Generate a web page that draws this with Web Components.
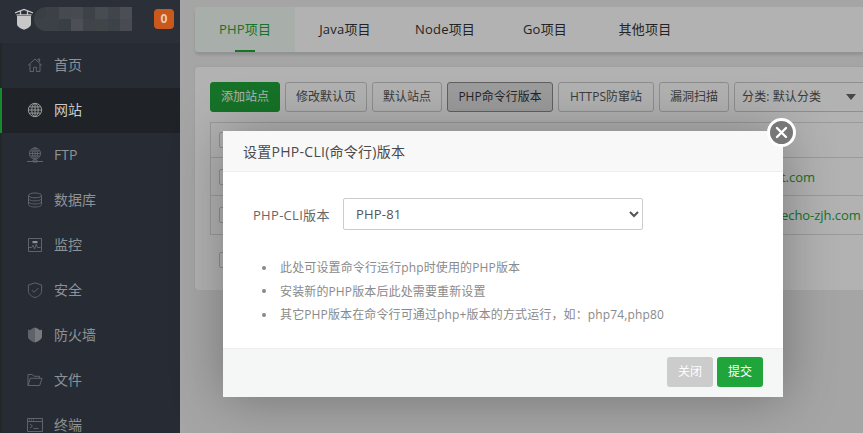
<!DOCTYPE html>
<html lang="zh"><head><meta charset="utf-8"><title>PHP-CLI</title>
<style>
html,body{margin:0;height:100%;overflow:hidden}
body{font-family:"Open Sans","Noto Sans CJK SC",sans-serif;background:#ededed}
bt-app{height:433px}
</style></head><body>
<bt-app>
  <bt-sidebar slot="side">
    <bt-nav icon="home">首页</bt-nav>
    <bt-nav icon="globe" active>网站</bt-nav>
    <bt-nav icon="ftp">FTP</bt-nav>
    <bt-nav icon="db">数据库</bt-nav>
    <bt-nav icon="monitor">监控</bt-nav>
    <bt-nav icon="shield">安全</bt-nav>
    <bt-nav icon="wall">防火墙</bt-nav>
    <bt-nav icon="folder">文件</bt-nav>
    <bt-nav icon="term">终端</bt-nav>
  </bt-sidebar>
  <bt-tabs>
    <bt-tab active>PHP项目</bt-tab><bt-tab>Java项目</bt-tab><bt-tab>Node项目</bt-tab><bt-tab>Go项目</bt-tab><bt-tab>其他项目</bt-tab>
  </bt-tabs>
  <bt-panel>
    <bt-btn kind="primary">添加站点</bt-btn><bt-btn>修改默认页</bt-btn><bt-btn>默认站点</bt-btn><bt-btn kind="active" style="width:106px">PHP命令行版本</bt-btn><bt-btn style="width:96px">HTTPS防窜站</bt-btn><bt-btn>漏洞扫描</bt-btn><bt-cat>分类: 默认分类</bt-cat>
    <bt-row slot="rows" h="35"></bt-row>
    <bt-row slot="rows" h="38">t.com</bt-row>
    <bt-row slot="rows" h="39">echo-zjh.com</bt-row>
  </bt-panel>
  <bt-modal>
    <span slot="title">设置PHP-CLI(命令行)版本</span>
    <span slot="label">PHP-CLI版本</span>
    <li>此处可设置命令行运行php时使用的PHP版本</li>
    <li>安装新的PHP版本后此处需要重新设置</li>
    <li>其它PHP版本在命令行可通过php+版本的方式运行，如：php74,php80</li>
  </bt-modal>
</bt-app>
<script>
const def=(n,css,html)=>{customElements.define(n,class extends HTMLElement{
  constructor(){super();this.attachShadow({mode:'open'}).innerHTML=`<style>${css}</style>${typeof html==='function'?html(this):html}`;}
})};
const I={
home:'<path d="M1 8.500 8 2l7 6.500M3 7v7.500h3.600v-4.200h2.800v4.200H13V7M11 3.600V2h1.600v3"/>',
globe:'<circle cx="8" cy="8" r="6.700"/><ellipse cx="8" cy="8" rx="3.200" ry="6.700"/><path d="M8 1.300v13.400M1.300 8h13.400M2.200 4.900h11.600M2.200 11.100h11.600"/>',
ftp:'<circle cx="8" cy="6.500" r="5.600"/><ellipse cx="8" cy="6.500" rx="2.600" ry="5.600"/><path d="M8 1v11M2.400 6.500h11.200M3.200 4h9.600M3.200 9h9.600M0 14.500h16M6 13h4v2H6z"/>',
db:'<ellipse cx="8" cy="3.400" rx="6.500" ry="2.400"/><path d="M1.500 3.400v9.200c0 1.300 2.900 2.400 6.500 2.400s6.500-1.100 6.500-2.400V3.400M1.500 6.500c0 1.300 2.900 2.400 6.500 2.400s6.500-1.100 6.500-2.400M1.500 9.600c0 1.300 2.900 2.400 6.500 2.400s6.500-1.100 6.500-2.400"/>',
monitor:'<path d="M1.500 1.500h13v13h-13zM1.500 10.500h3.200l1.300-2.400 1.600 4 1.600-5 1.200 3.400h3.100"/><path d="M5.500 4h5v2.200h-5z" fill="currentColor" stroke="none"/>',
shield:'<path d="M8 .8 14.600 3v6.200c0 3-3 5.200-6.600 6.400C4.400 14.400 1.400 12.200 1.400 9.200V3z"/><path d="m4.800 8 2.300 2.300 4.300-4.300"/>',
wall:'<path stroke="none" fill="#777b80" d="M1 2.500 3 3.300 5 1.800 8 .4l3 1.400 2 1.500 2-.8v7c0 2.800-3.400 4.800-7 5.900-3.600-1.100-7-3.100-7-5.900z"/><path stroke="none" fill="#272c34" opacity=".3" d="M8 .4v15c-3.600-1.100-7-3.100-7-5.900v-7l2 .8 2-1.500z"/>',
folder:'<path d="M1 13.500V2.500h4.500L7 4.300h5.500v2M1 13.500 3.300 6.300H15l-2.300 7.200z"/>',
term:'<path d="M.5 1.500h15v13H.5zM.5 4.500h15"/><path d="m3 7 2.500 2L3 11M6.500 11.500h5"/><path d="M2 3h1M4 3h1M6 3h1"/>'
};
def('bt-app',`:host{display:grid;grid-template-columns:180px 1fr;grid-template-rows:auto 1fr;position:relative;overflow:hidden;width:863px}
 .s{grid-row:1/3;min-width:0;position:relative;z-index:1}.m{min-width:0;padding:7px 0 0 15px;display:flex;flex-direction:column;gap:15px;overflow:hidden}`,
 `<div class="s"><slot name="side"></slot></div><div class="m"><slot></slot></div><div class="ov" style="position:absolute;inset:0;background:rgba(0,0,0,.3)"></div>`);
def('bt-sidebar',`:host{display:block;background:#272c34;height:433px;overflow:hidden;color:#8e9296;font-size:14px}
 header{height:43px;background:#2a2f38;display:flex;align-items:center;box-sizing:border-box;padding:0 6px 5px 15px}
 svg{width:18px;height:22px;flex:none}
 .mos{width:98px;height:24px;margin-left:1px;display:grid;grid-template-columns:repeat(8,12.250px);grid-auto-rows:12px;border-radius:12px 0 0 12px;overflow:hidden}
 .b{margin-left:auto;width:20px;height:20px;border-radius:4px;background:#c8581c;color:#f0c8b0;font:700 12px/20px "Open Sans",sans-serif;text-align:center}`,
 ()=>{const c=['3a3e45','3d4047','454950','474b51','3d4248','474b52','40454b','4b4e55','3c4047','3c4147','3a3e46','4c4f55','3e4449','404648','3c4248','484c52'];
 return `<header><svg viewBox="0 0 18 22"><path fill="#c8c8c8" d="M2 8h14v8c0 2.800-3.800 4.500-7 5.800C5.800 20.500 2 18.800 2 16z"/><path fill="none" stroke="#c8c8c8" stroke-width="1.300" d="M0 5 9 1.500 18 5M1.500 6.800h15M5.500 3v3.500M12.500 3v3.500"/></svg><div class="mos">${c.map(x=>`<i style="background:#${x}"></i>`).join('')}</div><div class="b">0</div></header><slot></slot>`});
def('bt-nav',`:host{display:flex;align-items:center;height:45px;box-sizing:border-box;border-left:2px solid #23282a;padding:0 0 2px 25px;gap:11px;line-height:20px}
 :host([active]){background:#1f2227;border-left-color:#178a2e;color:#c8cacc}
 svg{width:16px;height:16px;flex:none;fill:none;stroke:#5e646c;stroke-width:1}
 :host([active]) svg{stroke:#999}`,
 el=>`<svg viewBox="0 0 16 16">${I[el.getAttribute('icon')]}</svg><span><slot></slot></span>`);
def('bt-tabs',`:host{display:flex;height:45px;background:#fff;border-radius:4px 0 0 4px;box-shadow:0 3px 3px rgba(0,0,0,.12);flex:none;overflow:hidden}`,`<slot></slot>`);
def('bt-tab',`:host{display:block;position:relative;width:100px;flex:none;text-align:center;font-size:13px;line-height:45px;color:#333;letter-spacing:.2px}
 :host([active]){background:#f1f9f3;color:#20a53a}
 :host([active])::after{content:"";position:absolute;left:40px;bottom:0;width:20px;height:2px;background:#20a53a}`,`<slot></slot>`);
def('bt-panel',`:host{display:block;background:#fff;border-radius:4px 0 0 4px;box-sizing:border-box;padding:15px 0 0 15px;height:223px;box-shadow:0 0 3px rgba(0,0,0,.08);width:700px;flex:none}
 .t{display:flex;gap:5px;height:30px}
 .rows{margin-top:10px;border-left:1px solid #ddd;border-top:1px solid #ddd}
 .cb{display:block;width:14px;height:14px;border:1px solid #ccc;border-radius:2px;margin:17px 0 0 9px;background:#fff}`,
 `<div class="t"><slot></slot></div><div class="rows"><slot name="rows"></slot></div><span class="cb"></span>`);
def('bt-btn',`:host{display:block;flex:none;box-sizing:border-box;height:30px;line-height:28px;padding:0 10px;border:1px solid #ccc;border-radius:3px;font-size:12px;color:#555;background:#fff;text-align:center;white-space:nowrap}
 :host([kind=primary]){background:#20a53a;border-color:#20a53a;color:#fff}
 :host([kind=active]){background:#e0e0e0;border-color:#8c8c8c;color:#333}`,`<slot></slot>`);
def('bt-cat',`:host{display:block;flex:none;position:relative;box-sizing:border-box;width:140px;height:30px;line-height:28px;padding-left:7px;border:1px solid #ccc;border-radius:3px;font-size:12px;color:#555;background:#fff;letter-spacing:.1px}
 i{position:absolute;left:111px;top:11px;border:5.500px solid transparent;border-top:6px solid #666;border-bottom:0}`,`<slot></slot><i></i>`);
def('bt-row',`:host{display:flex;align-items:center;box-sizing:border-box;border-bottom:1px solid #ddd;font-size:13px;color:#20a53a;padding-left:570px;letter-spacing:-.05px}
 .cb{position:absolute;left:219px;width:14px;height:14px;border:1px solid #ccc;border-radius:2px;background:#fff}`,
 el=>{el.style.height=el.getAttribute('h')+'px';return `<span class="cb"></span><slot></slot>`});
def('bt-modal',`:host{position:absolute;z-index:2;left:223px;top:131px;width:560px;height:266px;background:#fff;box-shadow:1px 1px 50px rgba(0,0,0,.3);display:flex;flex-direction:column;font-size:12px;color:#666}
 header{height:41px;box-sizing:border-box;background:#f8f8f8;border-bottom:1px solid #eee;padding-left:20px;font-size:14px;line-height:41px;color:#4a4a4a;letter-spacing:.27px}
 .x{position:absolute;left:544px;top:-13px;width:23px;height:23px;border:3px solid #fff;border-radius:50%;background:#777;box-sizing:content-box}
 .x svg{display:block;width:23px;height:23px}
 main{flex:1;padding:26px 0 0 30px}
 .f{display:flex;align-items:center;height:32px;font-size:13px;color:#666}
 .f span{width:90px;letter-spacing:.3px}
 select{width:300px;height:32px;box-sizing:border-box;border:1px solid #ccc;border-radius:2px;background:#fff;font:13px "Open Sans",sans-serif;color:#555;padding:0 8px;letter-spacing:.2px}
 ul{margin:26px 0 0;padding:0 0 0 27px;color:#8a8a8a;line-height:23.500px;letter-spacing:.13px;list-style:none}
 ::slotted(li){list-style:none}
 ::slotted(li)::before{content:"";display:inline-block;width:4px;height:4px;border-radius:50%;background:#888;margin:0 14px 2px -18px;vertical-align:middle}
 footer{height:49px;box-sizing:border-box;border-top:1px solid #eee;background:#f5f7f6;display:flex;justify-content:flex-end;align-items:center;gap:4px;padding:0 20px 2px}
 .bn{width:46px;height:30px;border-radius:3px;color:#fff;text-align:center;line-height:30px;background:#20a53a}
 .bn.g{background:#ccc}`,
 `<header><slot name="title"></slot></header><div class="x"><svg viewBox="0 0 23 23"><path d="m7 7 9 9m0-9-9 9" stroke="#fff" stroke-width="2.400" stroke-linecap="round"/></svg></div>
 <main><div class="f"><span><slot name="label"></slot></span><select><option>PHP-81</option></select></div><ul><slot></slot></ul></main>
 <footer><div class="bn g">关闭</div><div class="bn">提交</div></footer>`);
</script>
</body></html>
